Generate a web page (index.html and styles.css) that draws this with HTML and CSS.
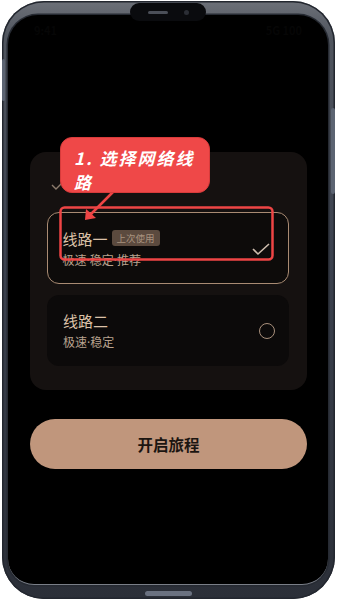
FILE: index.html
```html
<!DOCTYPE html>
<html lang="zh-CN">
<head>
  <meta charset="UTF-8">
  <meta name="viewport" content="width=device-width, initial-scale=1.0">
  <title>选择线路</title>
  <link rel="stylesheet" href="styles.css">
</head>
<body>
  <div class="phone">
    <div class="side-key left"></div>
    <div class="side-key right"></div>
    <div class="notch">
      <span class="speaker"></span>
      <span class="camera"></span>
    </div>

    <div class="screen">
      <div class="status">
        <span>9:41</span>
        <span>5G 100</span>
      </div>

      <div class="content">
        <div class="panel">
          <div class="panel-title">
            <svg class="title-check" width="14" height="12" viewBox="0 0 14 12">
              <polyline points="1,5 5,9 13,1" fill="none" stroke="#8c7b6c" stroke-width="1.4"/>
            </svg>
          </div>

          <div class="option active">
            <div class="option-text">
              <div class="option-name">线路一 <span class="badge">上次使用</span></div>
              <div class="option-desc">极速·稳定·推荐</div>
            </div>
            <svg class="option-check" width="20" height="14" viewBox="0 0 20 14">
              <polyline points="2,7 7,12 18,2" fill="none" stroke="#cdbcad" stroke-width="1.6"/>
            </svg>
          </div>

          <div class="option">
            <div class="option-text">
              <div class="option-name">线路二</div>
              <div class="option-desc">极速·稳定</div>
            </div>
            <span class="radio"></span>
          </div>
        </div>

        <button class="start">开启旅程</button>
      </div>

      <!-- tutorial overlay -->
      <div class="guide">
        <svg class="guide-marks" width="320" height="569" viewBox="0 0 320 569">
          <rect x="52.5" y="192.5" width="212" height="52" rx="4" fill="none" stroke="#ee4545" stroke-width="2.5"/>
          <line x1="106" y1="176" x2="81" y2="201" stroke="#ee4545" stroke-width="2.5"/>
          <polygon points="77,205 78,194 88,203" fill="#ee4545"/>
        </svg>
        <div class="bubble">1.&nbsp;选择网络线路</div>
      </div>
    </div>

    <div class="home-bar"></div>
  </div>
</body>
</html>
```

FILE: styles.css
```css
body {
  margin: 0;
  padding: 0;
  background: #fff;
  font-family: "Noto Sans CJK SC", "Noto Sans", sans-serif;
}

.phone {
  position: relative;
  box-sizing: border-box;
  width: 333px;
  height: 598px;
  margin: 1px 0 0 2px;
  padding: 14px 7px 0 6px;
  border-radius: 42px;
  background: linear-gradient(to bottom, #6c7078 0%, #50555e 6%, #3d4350 40%, #2b2f38 100%);
  box-shadow: inset 0 0 0 1.5px #23272f;
  display: flex;
  flex-direction: column;
}

.side-key {
  position: absolute;
  background: #5c6472;
  border-radius: 2px;
}

.side-key.left {
  left: 0;
  top: 58px;
  width: 3px;
  height: 42px;
}

.side-key.right {
  right: 0;
  top: 107px;
  width: 4px;
  height: 86px;
}

.notch {
  position: absolute;
  left: 128px;
  top: 2px;
  width: 76px;
  height: 18px;
  border-radius: 10px;
  background: #0a0b0e;
  z-index: 2;
  display: flex;
  align-items: center;
  justify-content: center;
  gap: 16px;
}

.speaker {
  width: 20px;
  height: 3px;
  border-radius: 2px;
  background: #4b4f58;
}

.camera {
  width: 5px;
  height: 5px;
  border-radius: 50%;
  background: #2b2e35;
}

.screen {
  position: relative;
  flex: none;
  height: 569px;
  background: #000;
  border-radius: 30px 30px 26px 26px;
  border-bottom: 1px solid #7a7f88;
  box-shadow: 0 0 0 1.5px #262a32;
  overflow: hidden;
}

.status {
  height: 30px;
  padding: 0 26px;
  display: flex;
  justify-content: space-between;
  align-items: center;
  font-size: 11px;
  font-weight: bold;
  color: #060606;
}

.content {
  padding: 107px 21px 0 22px;
  display: flex;
  flex-direction: column;
}

.panel {
  background: #151110;
  border-radius: 16px;
  padding: 24px 18px 24px 17px;
  display: flex;
  flex-direction: column;
}

.panel-title {
  height: 20px;
  display: flex;
  align-items: center;
  margin-bottom: 16px;
  padding-left: 4px;
}

.option {
  box-sizing: border-box;
  display: flex;
  align-items: center;
  justify-content: space-between;
  padding: 15px 14px 14px 16px;
  border-radius: 12px;
  background: #0c0a0a;
}

.option.active {
  border: 1.5px solid #a98b73;
  background: #0d0b0a;
  padding: 15px 17px 13px 14.5px;
  margin-bottom: 11px;
}

.option-name {
  height: 20px;
  display: flex;
  align-items: center;
  gap: 4px;
  font-size: 15px;
  color: #dcc2a8;
}

.badge {
  font-size: 9.5px;
  line-height: 16px;
  padding: 0 5px;
  border-radius: 3px;
  background: #5b4a3e;
  color: #a8927f;
}

.option-desc {
  margin-top: 4px;
  font-family: "Noto Sans", "Noto Sans CJK SC", sans-serif;
  font-size: 12px;
  line-height: 18px;
  color: #b8a28e;
}

.radio {
  width: 14px;
  height: 14px;
  border: 1.6px solid #a88f7b;
  border-radius: 50%;
}

.start {
  margin-top: 29px;
  height: 50px;
  border: none;
  border-radius: 25px;
  background: #c0967c;
  font-family: inherit;
  font-size: 15.5px;
  font-weight: bold;
  color: #1b1511;
}

.guide {
  position: absolute;
  inset: 0;
}

.guide-marks {
  position: absolute;
  left: 0;
  top: 0;
}

.bubble {
  position: absolute;
  left: 52px;
  top: 122px;
  box-sizing: border-box;
  width: 150px;
  height: 56px;
  padding: 8px 12px 0 13px;
  border-radius: 12px;
  background: #ef4848;
  border: 1px solid #d83b3b;
  font-size: 17px;
  line-height: 24px;
  font-weight: bold;
  font-style: italic;
  letter-spacing: 2px;
  color: #fff;
}

.home-bar {
  margin: 6px auto 0;
  width: 47px;
  height: 5px;
  border-radius: 3px;
  background: #6a7180;
}
```
